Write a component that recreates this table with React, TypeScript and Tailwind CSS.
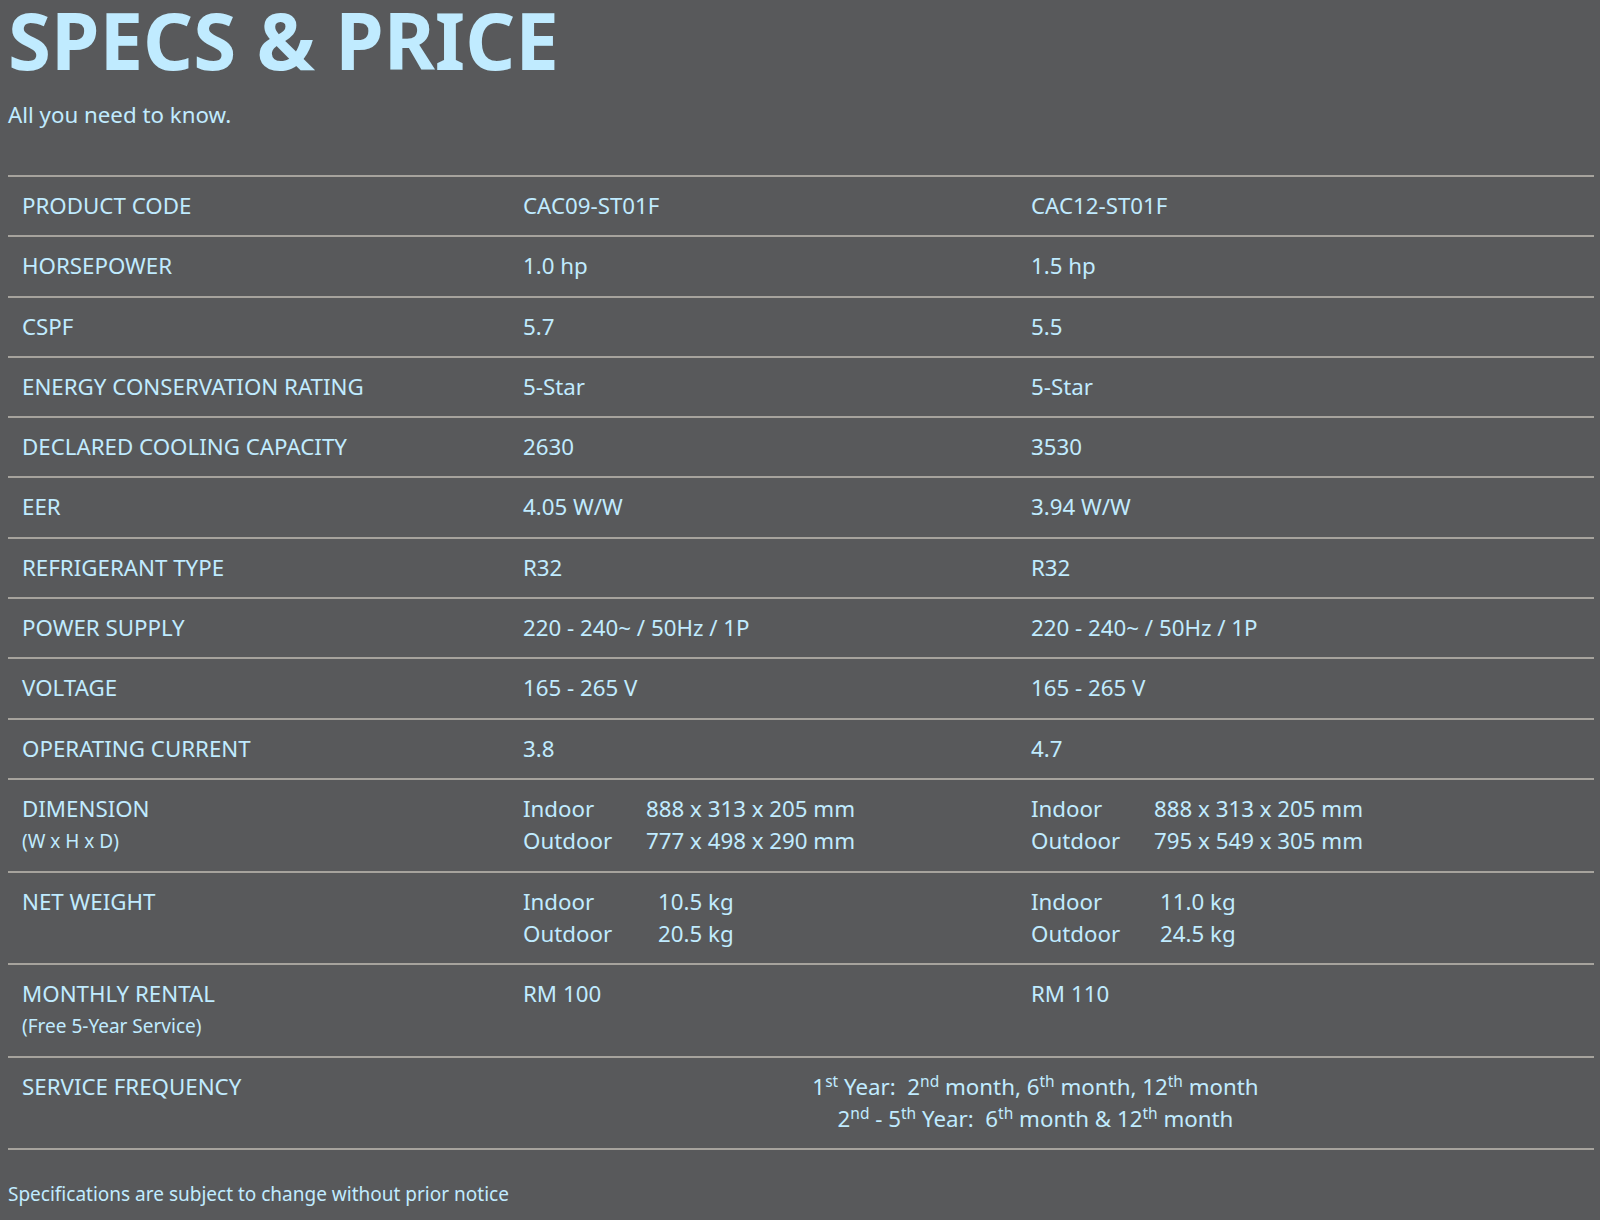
import React from "react";

type Row = {
  label: string;
  note?: string;
  a: React.ReactNode;
  b: React.ReactNode;
};

const Pair = ({ rows, w }: { rows: [string, string][]; w: string }) => (
  <div>
    {rows.map(([k, v]) => (
      <div key={k} className="flex">
        <span className={w}>{k}</span>
        <span>{v}</span>
      </div>
    ))}
  </div>
);

const rows: Row[] = [
  { label: "PRODUCT CODE", a: "CAC09-ST01F", b: "CAC12-ST01F" },
  { label: "HORSEPOWER", a: "1.0 hp", b: "1.5 hp" },
  { label: "CSPF", a: "5.7", b: "5.5" },
  { label: "ENERGY CONSERVATION RATING", a: "5-Star", b: "5-Star" },
  { label: "DECLARED COOLING CAPACITY", a: "2630", b: "3530" },
  { label: "EER", a: "4.05 W/W", b: "3.94 W/W" },
  { label: "REFRIGERANT TYPE", a: "R32", b: "R32" },
  { label: "POWER SUPPLY", a: "220 - 240~ / 50Hz / 1P", b: "220 - 240~ / 50Hz / 1P" },
  { label: "VOLTAGE", a: "165 - 265 V", b: "165 - 265 V" },
  { label: "OPERATING CURRENT", a: "3.8", b: "4.7" },
  {
    label: "DIMENSION",
    note: "(W x H x D)",
    a: (
      <Pair
        w="w-[123px]"
        rows={[
          ["Indoor", "888 x 313 x 205 mm"],
          ["Outdoor", "777 x 498 x 290 mm"],
        ]}
      />
    ),
    b: (
      <Pair
        w="w-[123px]"
        rows={[
          ["Indoor", "888 x 313 x 205 mm"],
          ["Outdoor", "795 x 549 x 305 mm"],
        ]}
      />
    ),
  },
  {
    label: "NET WEIGHT",
    a: (
      <Pair
        w="w-[135px]"
        rows={[
          ["Indoor", "10.5 kg"],
          ["Outdoor", "20.5 kg"],
        ]}
      />
    ),
    b: (
      <Pair
        w="w-[129px]"
        rows={[
          ["Indoor", "11.0 kg"],
          ["Outdoor", "24.5 kg"],
        ]}
      />
    ),
  },
  { label: "MONTHLY RENTAL", note: "(Free 5-Year Service)", a: "RM 100", b: "RM 110" },
];

export default function App() {
  return (
    <div
      className="min-h-[1220px] overflow-hidden bg-[#58595b] pl-2 pr-[6px] text-[#c0ebff]"
      style={{ fontFamily: '"Noto Sans", "Open Sans", sans-serif' }}
    >
      {/* Header */}
      <h1 className="-mt-[13px] text-[78px] font-bold leading-[106px]">SPECS &amp; PRICE</h1>
      <p className="mt-[7px] text-[22.3px] leading-[30px]">All you need to know.</p>

      {/* Spec table */}
      <div className="mt-[45px] border-t-2 border-[#a6a39d] text-[22.3px]">
        {rows.map((r) => (
          <div
            key={r.label}
            className="grid grid-cols-[501px_508px_1fr] border-b-2 border-[#a6a39d] py-[13px] leading-[32.3px]"
          >
            <div className="pl-[14px]">
              <div>{r.label}</div>
              {r.note && <div className="text-[19px]">{r.note}</div>}
            </div>
            <div className="pl-[14px]">{r.a}</div>
            <div className="pl-[14px]">{r.b}</div>
          </div>
        ))}
        <div className="grid grid-cols-[501px_1fr] border-b-2 border-[#a6a39d] py-[13px] leading-[32.3px]">
          <div className="pl-[14px]">SERVICE FREQUENCY</div>
          <div className="pr-[32px] text-center">
            <div>
              1<sup className="text-[15.5px]">st</sup> Year:&nbsp; 2<sup className="text-[15.5px]">nd</sup> month, 6
              <sup className="text-[15.5px]">th</sup> month, 12<sup className="text-[15.5px]">th</sup> month
            </div>
            <div>
              2<sup className="text-[15.5px]">nd</sup> - 5<sup className="text-[15.5px]">th</sup> Year:&nbsp; 6
              <sup className="text-[15.5px]">th</sup> month &amp; 12<sup className="text-[15.5px]">th</sup> month
            </div>
          </div>
        </div>
      </div>

      <p className="mt-[30px] text-[19px] leading-[28px]">
        Specifications are subject to change without prior notice
      </p>
    </div>
  );
}
